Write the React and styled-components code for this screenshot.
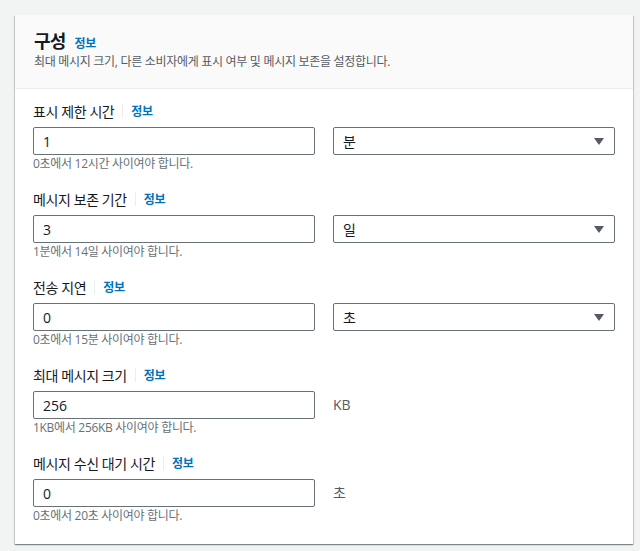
import React from 'react'
import styled, { createGlobalStyle } from 'styled-components'

const fields = [
  { label: '표시 제한 시간', value: '1', unit: '분', select: true, hint: '0초에서 12시간 사이여야 합니다.' },
  { label: '메시지 보존 기간', value: '3', unit: '일', select: true, hint: '1분에서 14일 사이여야 합니다.' },
  { label: '전송 지연', value: '0', unit: '초', select: true, hint: '0초에서 15분 사이여야 합니다.' },
  { label: '최대 메시지 크기', value: '256', unit: 'KB', hint: '1KB에서 256KB 사이여야 합니다.' },
  { label: '메시지 수신 대기 시간', value: '0', unit: '초', hint: '0초에서 20초 사이여야 합니다.' },
]

const Caret = () => (
  <svg width="10" height="7" viewBox="0 0 10 7">
    <path d="M0 0h10L5 7z" fill="#545b64" />
  </svg>
)

const App = () => {
  return (
    <>
      <GlobalStyle />
      <Page>
        <Card>
          <Header>
            <TitleRow>
              <Title>구성</Title>
              <InfoLink>정보</InfoLink>
            </TitleRow>
            <Description>최대 메시지 크기, 다른 소비자에게 표시 여부 및 메시지 보존을 설정합니다.</Description>
          </Header>
          <Body>
            {fields.map((f) => (
              <Field key={f.label}>
                <LabelRow>
                  <Label>{f.label}</Label>
                  <Divider />
                  <InfoLink>정보</InfoLink>
                </LabelRow>
                <Controls>
                  <Input defaultValue={f.value} />
                  {f.select ? (
                    <Select>
                      <span>{f.unit}</span>
                      <Caret />
                    </Select>
                  ) : (
                    <Unit>{f.unit}</Unit>
                  )}
                </Controls>
                <Hint>{f.hint}</Hint>
              </Field>
            ))}
          </Body>
        </Card>
      </Page>
    </>
  )
}

const GlobalStyle = createGlobalStyle`
  html, body {
    margin: 0;
    padding: 0;
    background: #f2f3f3;
  }
  body {
    font-family: "Open Sans", "Noto Sans CJK KR", sans-serif;
    color: #16191f;
  }
`

const Page = styled.div`
  padding: 15px 7px 6px 15px;
`

const Card = styled.div`
  background: #fff;
  box-shadow: 0 1px 1px 0 rgba(0, 28, 36, 0.3), 1px 1px 1px 0 rgba(0, 28, 36, 0.15),
    -1px 1px 1px 0 rgba(0, 28, 36, 0.15);
`

const Header = styled.div`
  background: #fafafa;
  border-bottom: 1px solid #eaeded;
  padding: 15px 18px 18px 19px;
`

const TitleRow = styled.div`
  display: flex;
  align-items: baseline;
  gap: 9px;
`

const Title = styled.h2`
  margin: 0;
  font-size: 18px;
  line-height: 22px;
  font-weight: 700;
  letter-spacing: -0.8px;
`

const InfoLink = styled.a`
  font-size: 12px;
  font-weight: 700;
  color: #0073bb;
  letter-spacing: -0.3px;
  cursor: pointer;
`

const Description = styled.p`
  margin: 2px 0 0;
  font-size: 12px;
  line-height: 16px;
  color: #545b64;
  letter-spacing: -0.3px;
`

const Body = styled.div`
  padding: 12px 18px 20px 18px;
  display: flex;
  flex-direction: column;
  gap: 17px;
`

const Field = styled.div`
  display: flex;
  flex-direction: column;
`

const LabelRow = styled.div`
  display: flex;
  align-items: center;
  height: 20px;
`

const Label = styled.span`
  font-size: 14px;
  color: #16191f;
  letter-spacing: -0.4px;
`

const Divider = styled.span`
  width: 1px;
  height: 14px;
  background: #eaeded;
  margin: 0 8px;
`

const Controls = styled.div`
  display: grid;
  grid-template-columns: 282px 282px;
  column-gap: 18px;
  margin-top: 6px;
`

const Input = styled.input`
  box-sizing: border-box;
  height: 28px;
  margin: 0;
  padding: 0 9px;
  border: 1px solid #687078;
  border-radius: 2px;
  font-family: "Open Sans", "Noto Sans CJK KR", sans-serif;
  font-size: 14px;
  color: #16191f;
  background: #fff;
  outline: none;
`

const Select = styled.div`
  box-sizing: border-box;
  height: 28px;
  display: flex;
  align-items: center;
  justify-content: space-between;
  padding: 0 10px 0 9px;
  border: 1px solid #687078;
  border-radius: 2px;
  font-size: 14px;
  color: #16191f;
`

const Unit = styled.div`
  display: flex;
  align-items: center;
  font-size: 14px;
  color: #545b64;
  padding-bottom: 2px;
`

const Hint = styled.div`
  margin-top: 1px;
  font-size: 12px;
  line-height: 16px;
  color: #687078;
  letter-spacing: -0.3px;
`

export default App
